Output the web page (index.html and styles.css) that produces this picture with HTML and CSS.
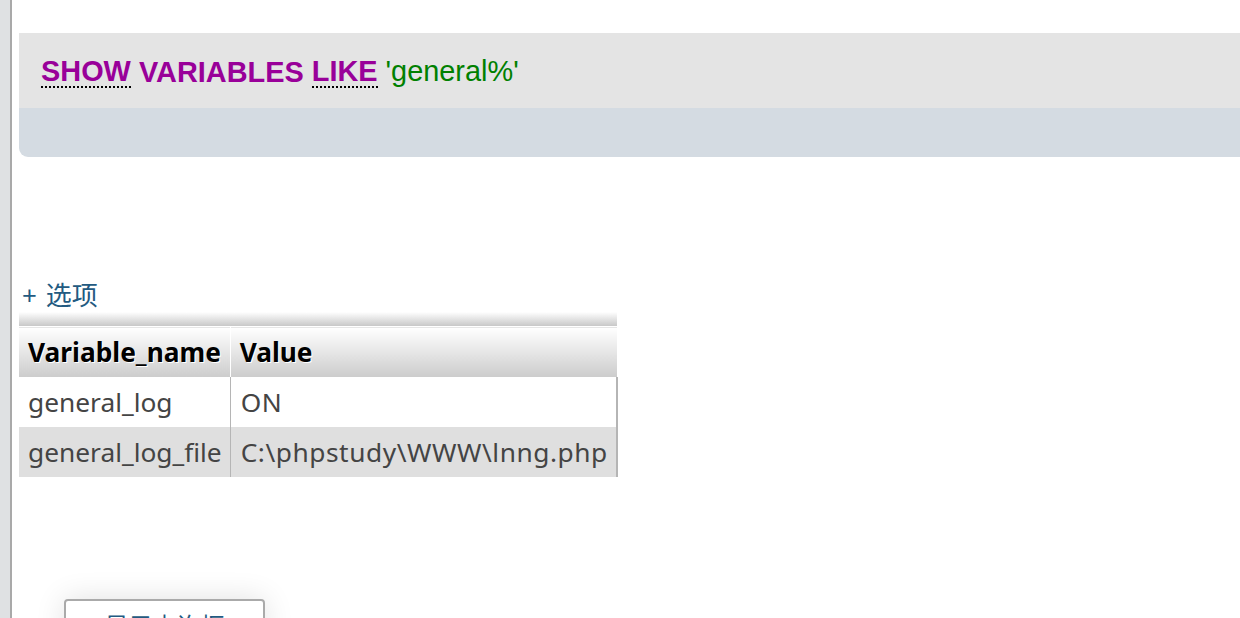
FILE: index.html
```html
<!DOCTYPE html>
<html>
<head>
<meta charset="utf-8">
<link rel="stylesheet" href="styles.css">
</head>
<body>
<div class="page">
  <div class="sidebar"></div>
  <div class="main">
    <div class="sqlbox">
      <div class="sql-code">
        <a class="kw">SHOW</a>&nbsp;<span class="kw plain">VARIABLES</span>&nbsp;<a class="kw">LIKE</a>&nbsp;<span class="str">'general%'</span>
      </div>
      <div class="sql-tools"></div>
    </div>
    <div class="options"><a class="opt-link">+ 选项</a></div>
    <table class="result">
      <thead>
        <tr class="sortrow"><th colspan="2"></th></tr>
        <tr class="headrow"><th>Variable_name</th><th>Value</th></tr>
      </thead>
      <tbody>
        <tr class="odd"><td>general_log</td><td class="val">ON</td></tr>
        <tr class="even"><td>general_log_file</td><td class="val">C:\phpstudy\WWW\lnng.php</td></tr>
      </tbody>
    </table>
    <div class="bottom">
      <button class="qbtn">显示查询框</button>
    </div>
  </div>
</div>
</body>
</html>
```

FILE: styles.css
```css
html, body {
  margin: 0;
  padding: 0;
  background: #fff;
  overflow: hidden;
}
.page {
  display: flex;
  width: 1240px;
  height: 618px;
  overflow: hidden;
}
.sidebar {
  width: 10px;
  flex: none;
  background: #dfe1e3;
  border-right: 2px solid #a9a9a9;
}
.main {
  flex: 1;
  padding: 33px 0 0 7px;
  display: flex;
  flex-direction: column;
  align-items: flex-start;
  min-width: 0;
}
.main > * {
  flex: none;
}
.sqlbox {
  align-self: stretch;
  margin-right: -20px;
  border-radius: 0 0 0 9px;
  overflow: hidden;
}
.sql-code {
  height: 75px;
  background: #e4e4e4;
  display: flex;
  align-items: center;
  padding-left: 22px;
  font-family: "Liberation Sans", Arial, sans-serif;
  font-size: 28.9px;
  white-space: nowrap;
  padding-top: 2px;
  box-sizing: border-box;
}
.kw {
  color: #990099;
  font-weight: bold;
  line-height: 30px;
}
a.kw {
  border-bottom: 2px dotted #000;
}
.str { color: #008000; }
.sql-tools {
  height: 49px;
  background: #d4dbe2;
}
.options {
  margin-top: 121px;
  height: 34px;
  padding-left: 3px;
  font-family: "Noto Sans", "Noto Sans CJK SC", sans-serif;
  font-size: 26px;
  line-height: 34px;
  color: #235a81;
}
.opt-link {
  word-spacing: 2px;
}
.result {
  border-collapse: collapse;
  font-family: "Noto Sans", "Noto Sans CJK SC", sans-serif;
  font-size: 26.3px;
}
.sortrow th {
  height: 14px;
  padding: 0;
  background: linear-gradient(#ffffff, #c8c8c8);
  border-bottom: 1px solid #fff;
}
.headrow th {
  height: 50px;
  box-sizing: border-box;
  padding: 0 8px 0 9px;
  text-align: left;
  color: #000;
  font-weight: bold;
  text-shadow: 1px 1px 0 #fff;
  background: linear-gradient(#ffffff, #cccccc);
  white-space: nowrap;
}
.headrow th:first-child {
  border-right: 1px solid #fff;
}
td {
  height: 50px;
  box-sizing: border-box;
  padding: 0 8px 0 9px;
  color: #444;
  white-space: nowrap;
}
td:first-child {
  border-right: 1px solid #b5b5b5;
}
td.val {
  border-right: 2px solid #b5b5b5;
  letter-spacing: 0.55px;
  padding-left: 10px;
}
.odd td { background: #fff; }
.even td { background: #dfdfdf; }
.bottom {
  padding: 122px 0 0 45px;
}
.qbtn {
  width: 201px;
  height: 44px;
  background: #fff;
  border: 2px solid #aaa;
  border-radius: 4px;
  box-shadow: 0 0 30px rgba(0,0,0,0.12);
  font-family: "Noto Sans CJK SC", sans-serif;
  font-size: 24px;
  color: #235a81;
  padding: 6px 0 0 0;
  vertical-align: top;
  text-align: center;
}
```
